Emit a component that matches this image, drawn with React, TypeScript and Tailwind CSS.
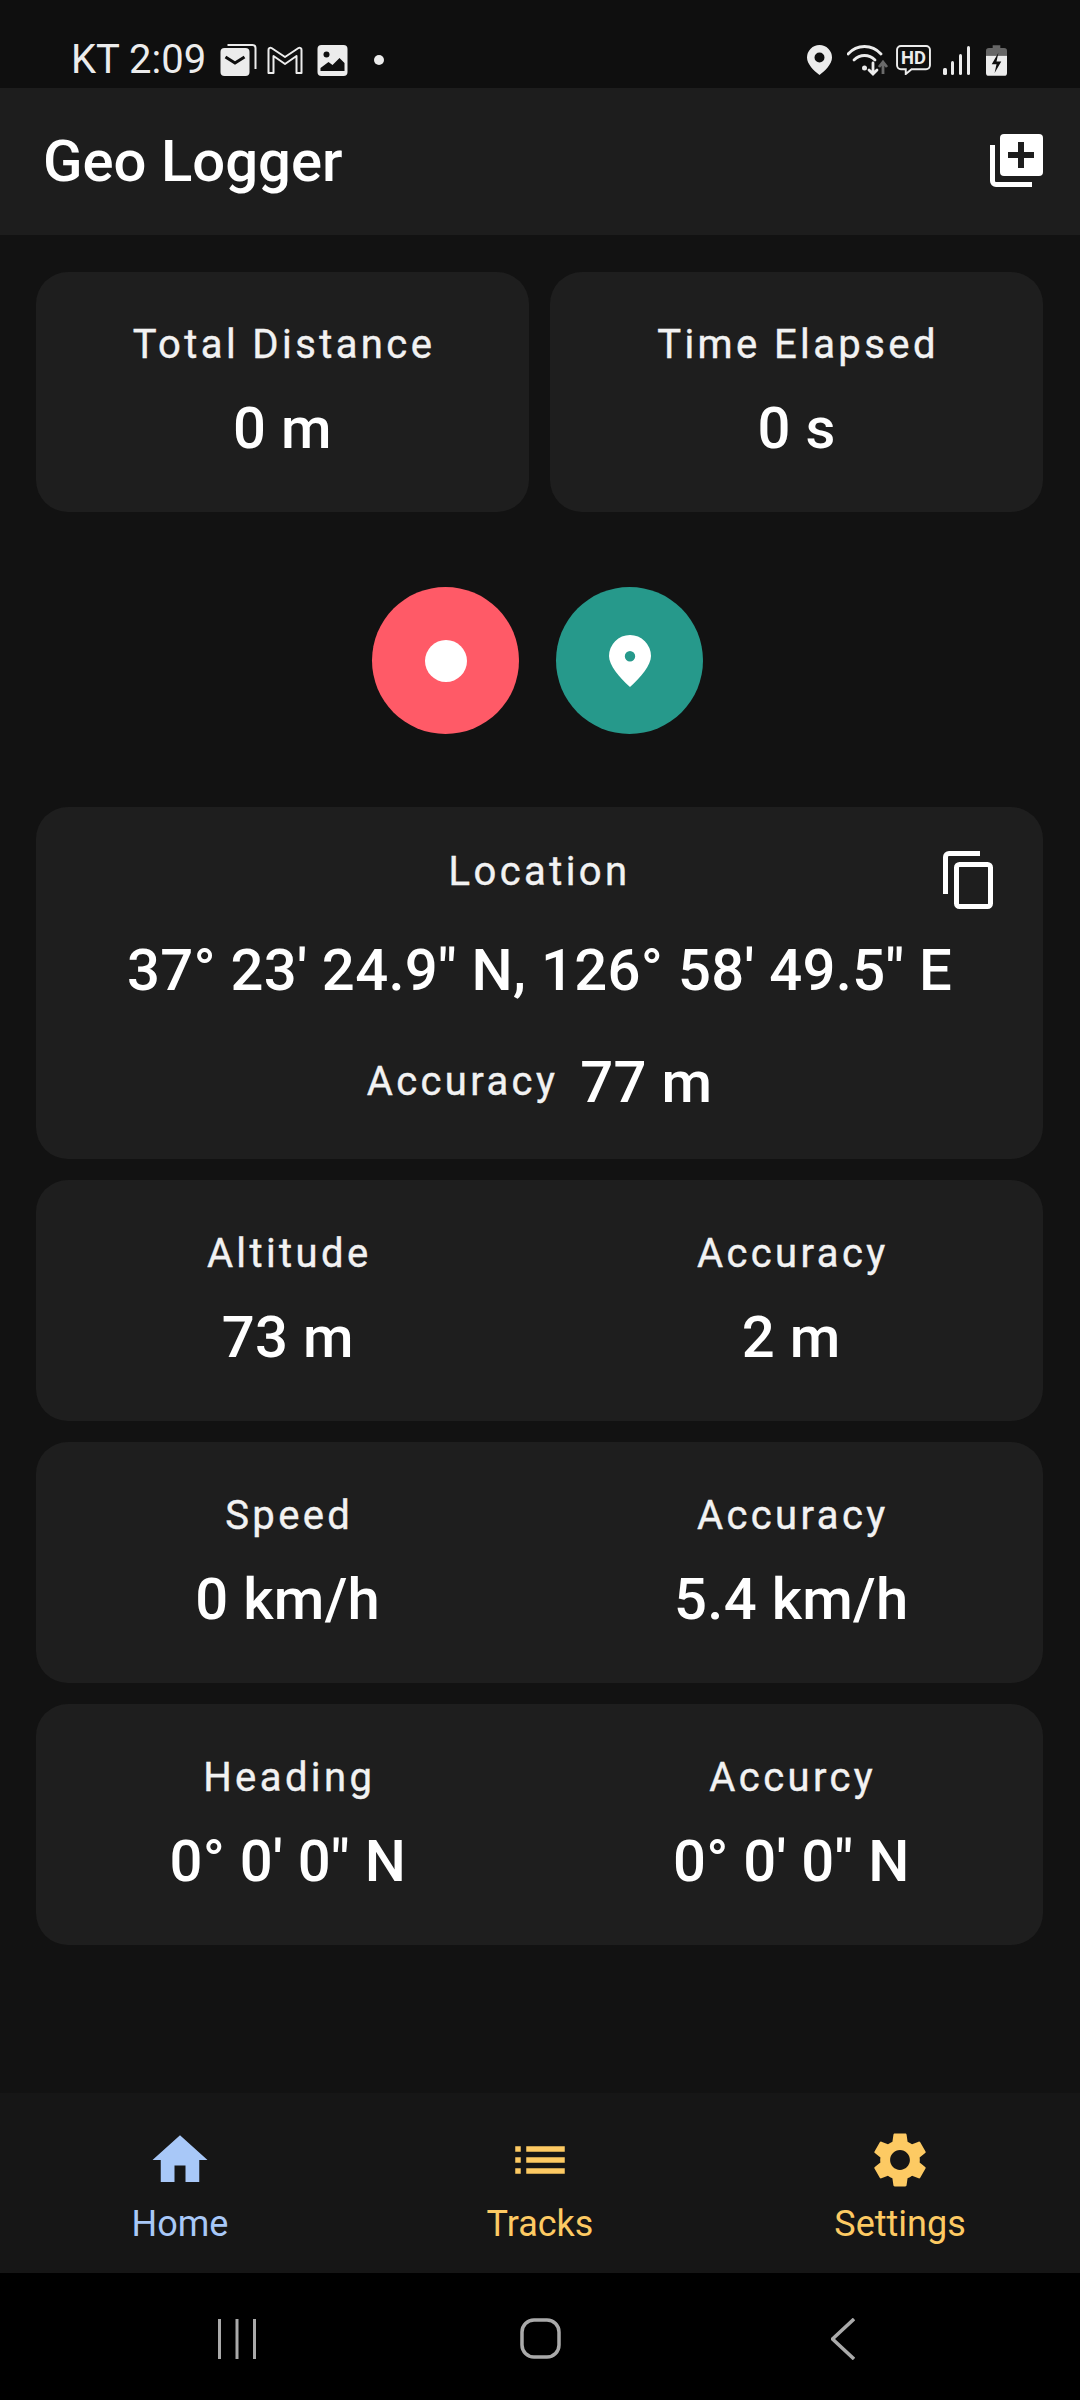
const readings = [
  { left: "Altitude", leftValue: "73 m", right: "Accuracy", rightValue: "2 m" },
  { left: "Speed", leftValue: "0 km/h", right: "Accuracy", rightValue: "5.4 km/h" },
  { left: "Heading", leftValue: `0° 0' 0" N`, right: "Accurcy", rightValue: `0° 0' 0" N` },
];

function Stat({ label, value }: { label: string; value: string }) {
  return (
    <div className="flex flex-1 flex-col items-center">
      <div className="ml-[3px] text-[40px] leading-[44px] tracking-[3.4px] text-[#f2f2f2] [-webkit-text-stroke:0.4px_#f2f2f2]">{label}</div>
      <div className="mt-[28px] text-[58px] leading-[66px] font-medium tracking-[0.3px] text-white">{value}</div>
    </div>
  );
}

function StatusBar() {
  return (
    <div className="flex h-[88px] items-center justify-between bg-[#0f0f0f] pl-[71px] pr-[73px] pt-[32px]">
      <div className="flex items-center">
        <span className="text-[40px] leading-[44px] text-[#ececec]">KT 2:09</span>
        <svg width="37" height="32" viewBox="0 0 36 32" className="ml-[14px]">
          <path d="M7 1h25a3 3 0 0 1 3 3v21" fill="none" stroke="#ececec" strokeWidth="2" />
          <rect x="0" y="4" width="29" height="28" rx="4" fill="#ececec" />
          <path d="M5 13l9.500 6 9.500-6" fill="none" stroke="#0f0f0f" strokeWidth="3" />
        </svg>
        <svg width="36" height="28" viewBox="0 0 35 28" className="ml-[10px]">
          <path d="M1 27V4a2 2 0 0 1 3-2l13.500 9L31 2a2 2 0 0 1 3 2v23h-5V10l-11.500 8L6 10v17z" fill="none" stroke="#ececec" strokeWidth="2" strokeLinejoin="round" />
        </svg>
        <svg width="31" height="31" viewBox="0 0 30 31" className="ml-[14px]">
          <rect width="30" height="31" rx="4" fill="#ececec" />
          <circle cx="9" cy="9.500" r="3" fill="#0f0f0f" />
          <path d="M3 26v-3l8-6 4 3 7-7 5 5v8z" fill="#0f0f0f" />
        </svg>
        <div className="ml-[26px] h-[10px] w-[10px] rounded-full bg-[#ececec]" />
      </div>
      <div className="flex items-center">
        <svg width="25" height="30" viewBox="0 0 25 30">
          <path fillRule="evenodd" d="M12.500 0A12.500 12.500 0 0 1 25 12.500C25 19 18 26 12.500 30 7 26 0 19 0 12.500A12.500 12.500 0 0 1 12.500 0zm0 7.500a5 5 0 1 0 0 10 5 5 0 0 0 0-10z" fill="#ececec" />
        </svg>
        <svg width="42" height="31" viewBox="0 0 42 31" className="ml-[15px]">
          <g fill="none" stroke="#ececec" strokeWidth="2.800" strokeLinecap="round">
            <path d="M1 9C10 -1 25 -1 34 9" />
            <path d="M7 15c6-6 15-6 21 0" />
            <path d="M26 18v11M22 25l4 4 4-4" />
          </g>
          <circle cx="17.500" cy="23" r="2.500" fill="#ececec" />
          <path d="M36 29V18M32 22l4-5 4 5" fill="none" stroke="#6a6a6a" strokeWidth="2.800" />
        </svg>
        <svg width="35" height="30" viewBox="0 0 36 31" className="ml-[7px]">
          <path d="M5 1h26a4 4 0 0 1 4 4v16a4 4 0 0 1-4 4H16l-6 5v-5H5a4 4 0 0 1-4-4V5a4 4 0 0 1 4-4z" fill="none" stroke="#ececec" strokeWidth="2" />
          <text x="18" y="20" textAnchor="middle" fontSize="19" fontWeight="700" fill="#ececec" fontFamily="Roboto, sans-serif">HD</text>
        </svg>
        <svg width="28" height="29" viewBox="0 0 28 29" className="ml-[12px]">
          <g fill="#ececec">
            <rect x="0" y="22" width="4" height="7" rx="1.500" />
            <rect x="8" y="15" width="3" height="14" rx="1.500" />
            <rect x="16" y="8" width="3" height="21" rx="1.500" />
            <rect x="24" y="0" width="3" height="29" rx="1.500" />
          </g>
        </svg>
        <svg width="21" height="33" viewBox="0 0 22 32" className="ml-[15px]">
          <path d="M7 0h8v3h4a3 3 0 0 1 3 3v5H0V6a3 3 0 0 1 3-3h4z" fill="#666666" />
          <path d="M0 11h22v18a3 3 0 0 1-3 3H3a3 3 0 0 1-3-3z" fill="#ececec" />
          <path d="M13 8l-7 12h5l-2 9 7-12h-5z" fill="#0f0f0f" />
        </svg>
      </div>
    </div>
  );
}

export default function App() {
  return (
    <div className="flex h-[2400px] w-[1080px] flex-col bg-[#121212] font-['Roboto',sans-serif] text-white">
      <StatusBar />

      {/* App bar */}
      <div className="flex h-[147px] items-center justify-between bg-[#1d1d1d] pl-[43px] pr-[37px]">
        <div className="-mt-[2px] text-[58px] leading-[64px] font-medium">Geo Logger</div>
        <svg width="53" height="53" viewBox="0 0 53 53" className="-mt-[2px]">
          <path d="M2.500 11v36a3.500 3.500 0 0 0 3.500 3.500h36" fill="none" stroke="#fff" strokeWidth="5" />
          <rect x="10" y="0" width="43" height="42" rx="4" fill="#fff" />
          <path d="M31 8v26M18 21h26" stroke="#1d1d1d" strokeWidth="6" />
        </svg>
      </div>

      <div className="flex flex-1 flex-col pl-[36px] pr-[37px] pt-[37px]">
        <div className="flex gap-[21px]">
          <div className="flex h-[240px] flex-1 items-center rounded-[32px] bg-[#1e1e1e]">
            <Stat label="Total Distance" value="0 m" />
          </div>
          <div className="flex h-[240px] flex-1 items-center rounded-[32px] bg-[#1e1e1e]">
            <Stat label="Time Elapsed" value="0 s" />
          </div>
        </div>

        {/* Record and waypoint buttons */}
        <div className="mt-[75px] flex justify-center gap-[37px] pr-[4px]">
          <button className="flex h-[147px] w-[147px] items-center justify-center rounded-full bg-[#ff5a67]">
            <div className="h-[42px] w-[42px] rounded-full bg-white" />
          </button>
          <button className="flex h-[147px] w-[147px] items-center justify-center rounded-full bg-[#26998b]">
            <svg width="42" height="52" viewBox="0 0 42 52">
              <path fillRule="evenodd" d="M21 0a21 21 0 0 1 21 21c0 9-10 21-21 31C10 42 0 30 0 21A21 21 0 0 1 21 0zm0 16a5.200 5.200 0 1 0 0 10.400A5.200 5.200 0 0 0 21 16z" fill="#fff" />
            </svg>
          </button>
        </div>

        {/* Location */}
        <div className="relative mt-[73px] flex h-[352px] flex-col items-center rounded-[32px] bg-[#1e1e1e] pt-[43px]">
          <div className="text-[40px] leading-[44px] tracking-[3.4px] text-[#f2f2f2] [-webkit-text-stroke:0.4px_#f2f2f2]">Location</div>
          <div className="mt-[43px] text-[58px] leading-[66px] font-medium tracking-[0.3px]">37° 23' 24.9" N, 126° 58' 49.5" E</div>
          <div className="mt-[46px] flex items-center gap-[22px]">
            <span className="text-[40px] leading-[44px] tracking-[3.4px] text-[#f2f2f2] [-webkit-text-stroke:0.4px_#f2f2f2]">Accuracy</span>
            <span className="text-[58px] leading-[66px] font-medium tracking-[0.3px]">77 m</span>
          </div>
          <svg width="50" height="58" viewBox="0 0 50 58" className="absolute right-[50px] top-[44px]">
            <path d="M37 2.500H6a3.500 3.500 0 0 0-3.500 3.500v37" fill="none" stroke="#fff" strokeWidth="5" />
            <rect x="13.500" y="13.500" width="34" height="42" rx="3" fill="none" stroke="#fff" strokeWidth="5" />
          </svg>
        </div>

        <div className="mt-[21px] flex flex-col gap-[21px]">
          {readings.map((r) => (
            <div key={r.left} className="flex h-[241px] items-center rounded-[32px] bg-[#1e1e1e]">
              <Stat label={r.left} value={r.leftValue} />
              <Stat label={r.right} value={r.rightValue} />
            </div>
          ))}
        </div>
      </div>

      {/* Bottom navigation */}
      <div className="flex h-[180px] justify-center bg-[#161616] pt-[34px]">
        <div className="flex w-[360px] flex-col items-center text-[#a8c8f8]">
          <svg width="66" height="66" viewBox="0 0 24 24">
            <path d="M10 20v-6h4v6h5v-8h3L12 3 2 12h3v8z" fill="#a8c8f8" />
          </svg>
          <span className="mt-[11px] text-[36px] leading-[40px]">Home</span>
        </div>
        <div className="flex w-[360px] flex-col items-center text-[#fdca63]">
          <svg width="66" height="66" viewBox="0 0 24 24">
            <path d="M3 13h2v-2H3v2zm0 4h2v-2H3v2zm0-8h2V7H3v2zm4 4h14v-2H7v2zm0 4h14v-2H7v2zM7 7v2h14V7H7z" fill="#fdca63" />
          </svg>
          <span className="mt-[11px] text-[36px] leading-[40px]">Tracks</span>
        </div>
        <div className="flex w-[360px] flex-col items-center text-[#fdca63]">
          <svg width="66" height="66" viewBox="0 0 24 24">
            <path d="M19.140 12.940c.04-.3.06-.61.06-.94 0-.32-.02-.64-.07-.94l2.030-1.580c.18-.14.23-.41.12-.61l-1.920-3.320c-.12-.22-.37-.29-.59-.22l-2.390.96c-.5-.38-1.030-.7-1.620-.94l-.36-2.540c-.04-.24-.24-.41-.48-.41h-3.840c-.24 0-.43.17-.47.41l-.36 2.540c-.59.24-1.130.57-1.620.94l-2.390-.96c-.22-.08-.47 0-.59.22L2.740 8.870c-.12.21-.08.47.12.61l2.030 1.580c-.05.3-.09.63-.09.94s.02.64.07.94l-2.030 1.580c-.18.14-.23.41-.12.61l1.920 3.320c.12.22.37.29.59.22l2.390-.96c.5.38 1.030.7 1.620.94l.36 2.540c.05.24.24.41.48.41h3.840c.24 0 .44-.17.47-.41l.36-2.540c.59-.24 1.130-.56 1.620-.94l2.390.96c.22.08.47 0 .59-.22l1.920-3.320c.12-.22.07-.47-.12-.61l-2.010-1.580zM12 15.600c-1.980 0-3.600-1.620-3.600-3.600s1.620-3.600 3.600-3.600 3.600 1.620 3.600 3.600-1.620 3.600-3.600 3.600z" fill="#fdca63" />
          </svg>
          <span className="mt-[11px] text-[36px] leading-[40px]">Settings</span>
        </div>
      </div>

      {/* System navigation */}
      <div className="flex h-[127px] items-center justify-center bg-black pt-[4px]">
        <div className="flex w-[303px] justify-center">
          <svg width="38" height="40" viewBox="0 0 38 40">
            <path d="M1.500 0v40M19 0v40M36.500 0v40" stroke="#aaa" strokeWidth="3" />
          </svg>
        </div>
        <div className="flex w-[303px] justify-center">
          <svg width="41" height="41" viewBox="0 0 41 41">
            <rect x="2" y="2" width="37" height="37" rx="12" fill="none" stroke="#aaa" strokeWidth="3.500" />
          </svg>
        </div>
        <div className="flex w-[303px] justify-center">
          <svg width="24" height="42" viewBox="0 0 24 42">
            <path d="M23 1L1.500 21 23 41" fill="none" stroke="#aaa" strokeWidth="3.500" />
          </svg>
        </div>
      </div>
    </div>
  );
}
